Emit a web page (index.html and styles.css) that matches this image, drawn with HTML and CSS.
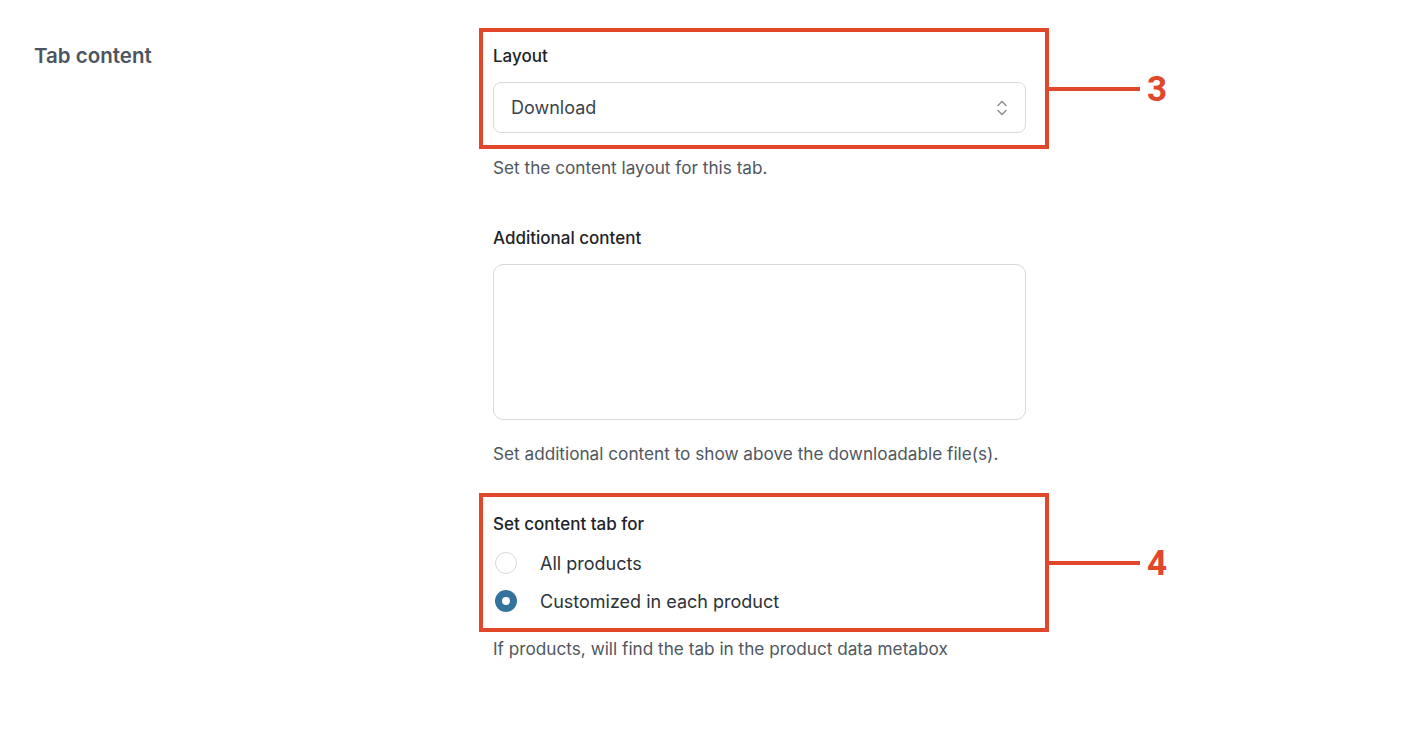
FILE: index.html
```html
<!DOCTYPE html>
<html lang="en">
<head>
<meta charset="UTF-8">
<meta name="viewport" content="width=device-width, initial-scale=1.0">
<title>Tab content</title>
<link rel="stylesheet" href="styles.css">
</head>
<body>
<div class="settings-row">
    <div class="row-title">Tab content</div>

    <div class="row-fields">
        <div class="callout-box">
            <label class="field-label" for="layout">Layout</label>
            <div class="select-wrap">
                <select id="layout" class="select">
                    <option>Download</option>
                </select>
                <svg class="select-arrows" width="12" height="20" viewBox="0 0 12 20">
                    <path d="M2 7.5 L6 3.5 L10 7.5" fill="none" stroke="#8c8f94" stroke-width="1.5" stroke-linecap="round" stroke-linejoin="round"/>
                    <path d="M2 12.5 L6 16.5 L10 12.5" fill="none" stroke="#8c8f94" stroke-width="1.5" stroke-linecap="round" stroke-linejoin="round"/>
                </svg>
            </div>
            <div class="callout-mark"><span class="callout-line"></span><span class="callout-num">3</span></div>
        </div>
        <p class="field-desc">Set the content layout for this tab.</p>

        <div class="field">
            <label class="field-label" for="extra">Additional content</label>
            <textarea id="extra" class="textarea"></textarea>
            <p class="field-desc desc-gap">Set additional content to show above the downloadable file(s).</p>
        </div>

        <div class="callout-box callout-radios">
            <div class="field-label">Set content tab for</div>
            <label class="radio-row">
                <span class="radio"></span>
                <span>All products</span>
            </label>
            <label class="radio-row">
                <span class="radio checked"></span>
                <span>Customized in each product</span>
            </label>
            <div class="callout-mark"><span class="callout-line"></span><span class="callout-num">4</span></div>
        </div>
        <p class="field-desc desc-last">If products, will find the tab in the product data metabox</p>
    </div>
</div>
</body>
</html>
```

FILE: styles.css
```css
body {
    margin: 0;
    padding: 0;
    background: #fff;
    font-family: Inter, "Noto Sans", sans-serif;
    color: #2c3338;
}
.settings-row {
    display: flex;
    padding-top: 28px;
}
.row-title {
    width: 459px;
    padding-left: 34px;
    padding-top: 14px;
    box-sizing: border-box;
    font-size: 20.5px;
    font-weight: 600;
    color: #4c5561;
    line-height: 28px;
    flex-shrink: 0;
}
.row-fields {
    width: 570px;
    padding-left: 34px;
}
.callout-box {
    position: relative;
    margin-left: -14px;
    width: 570px;
    box-sizing: border-box;
    border: 4px solid #e0472b;
    padding: 12px 19px 12px 10px;
}
.callout-radios {
    padding-top: 15px;
    padding-bottom: 8px;
}
.callout-mark {
    position: absolute;
    left: 100%;
    top: 50%;
    margin-left: 4px;
    transform: translateY(-50%);
    display: flex;
    align-items: center;
}
.callout-line {
    display: block;
    width: 91px;
    height: 4px;
    background: #e0472b;
}
.callout-num {
    margin-left: 7px;
    font-family: Roboto, "Liberation Sans", sans-serif;
    font-weight: 700;
    font-size: 35px;
    line-height: 40px;
    color: #e0472b;
    position: relative;
    top: 1px;
}
.field-label {
    display: block;
    font-size: 17px;
    font-weight: 500;
    line-height: 24px;
    color: #1e2327;
}
.select-wrap {
    position: relative;
    margin-top: 14px;
}
.select {
    appearance: none;
    -webkit-appearance: none;
    display: block;
    width: 533px;
    height: 51px;
    box-sizing: border-box;
    border: 1px solid #d6d9dd;
    border-radius: 8px;
    background: #fff;
    padding: 0 17px;
    font-family: inherit;
    font-size: 18px;
    color: #3c434a;
}
.select-arrows {
    position: absolute;
    right: 18px;
    top: 16px;
    pointer-events: none;
}
.field-desc {
    margin: 7px 0 0;
    font-size: 17.2px;
    line-height: 24px;
    color: #50575e;
}
.field {
    margin-top: 46px;
    margin-bottom: 27px;
}
.textarea {
    display: block;
    margin-top: 14px;
    width: 533px;
    height: 156px;
    box-sizing: border-box;
    border: 1px solid #d6d9dd;
    border-radius: 10px;
    resize: none;
}
.desc-gap {
    margin-top: 22px;
}
.desc-last {
    margin-top: 5px;
}
.radio-row {
    display: flex;
    align-items: center;
    height: 38px;
    font-size: 18px;
    color: #2c3338;
}
.callout-radios .field-label {
    margin-bottom: 8px;
}
.radio {
    width: 22px;
    height: 22px;
    box-sizing: border-box;
    border: 1px solid #d6d9dd;
    border-radius: 50%;
    margin-left: 2px;
    margin-right: 23px;
    background: #fff;
}
.radio.checked {
    border: 7px solid #33739b;
    background: #fff;
}
```
